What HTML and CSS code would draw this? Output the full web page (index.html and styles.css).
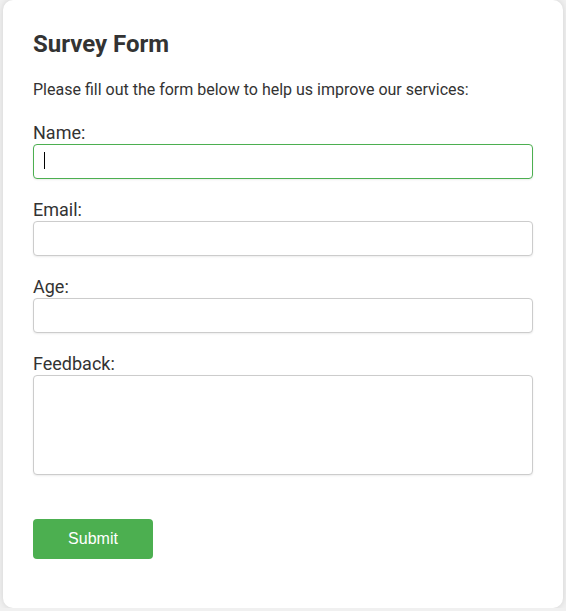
FILE: index.html
```html
<!DOCTYPE html>
<html lang="en">
<head>
<meta charset="utf-8">
<title>Survey Form</title>
<link rel="stylesheet" href="styles.css">
</head>
<body>
<div class="container">
  <h1 class="title">Survey Form</h1>
  <p class="intro">Please fill out the form below to help us improve our services:</p>
  <form class="form">
    <div class="group">
      <label class="label" for="name">Name:</label>
      <input class="field focused" id="name" type="text">
      <span class="caret"></span>
    </div>
    <div class="group">
      <label class="label" for="email">Email:</label>
      <input class="field" id="email" type="email">
    </div>
    <div class="group">
      <label class="label" for="age">Age:</label>
      <input class="field" id="age" type="number">
    </div>
    <div class="group">
      <label class="label" for="feedback">Feedback:</label>
      <textarea class="field area" id="feedback"></textarea>
    </div>
    <button class="submit" type="button">Submit</button>
  </form>
</div>
</body>
</html>
```

FILE: styles.css
```css
html, body {
  margin: 0;
  padding: 0;
}
body {
  background: #f0f0f0;
  font-family: Roboto, "Liberation Sans", sans-serif;
  color: #333;
}
.container {
  width: 560px;
  box-sizing: border-box;
  margin: 0 auto;
  background: #fff;
  border-radius: 10px;
  box-shadow: 0 0 6px rgba(0, 0, 0, 0.12);
  padding: 30px 30px 49px;
}
.title {
  margin: 0 0 22px;
  font-size: 24px;
  line-height: 28px;
  font-weight: 700;
  color: #333;
}
.intro {
  margin: 0 0 23px;
  font-size: 16px;
  line-height: 19px;
  color: #333;
}
.form {
  display: flex;
  flex-direction: column;
}
.group {
  position: relative;
  display: flex;
  flex-direction: column;
  margin-bottom: 20px;
}
.label {
  font-size: 18px;
  line-height: 21px;
  color: #333;
  margin-bottom: 1px;
}
.field {
  box-sizing: border-box;
  width: 500px;
  height: 35px;
  padding: 8px;
  border: 1px solid #ccc;
  border-radius: 4px;
  box-shadow: 0 1px 2px rgba(0, 0, 0, 0.08);
  font-family: Roboto, sans-serif;
  font-size: 16px;
  background: #fff;
  outline: none;
  margin: 0;
}
.field.focused {
  border-color: #4caf50;
}
.caret {
  position: absolute;
  left: 11px;
  top: 30px;
  width: 1px;
  height: 17px;
  background: #000;
}
.area {
  height: 100px;
  resize: none;
}
.submit {
  margin-top: 24px;
  width: 120px;
  height: 40px;
  background: #4caf50;
  color: #fff;
  border: none;
  border-radius: 4px;
  font-family: "Liberation Sans", Arial, sans-serif;
  font-size: 16px;
  cursor: pointer;
}
```
